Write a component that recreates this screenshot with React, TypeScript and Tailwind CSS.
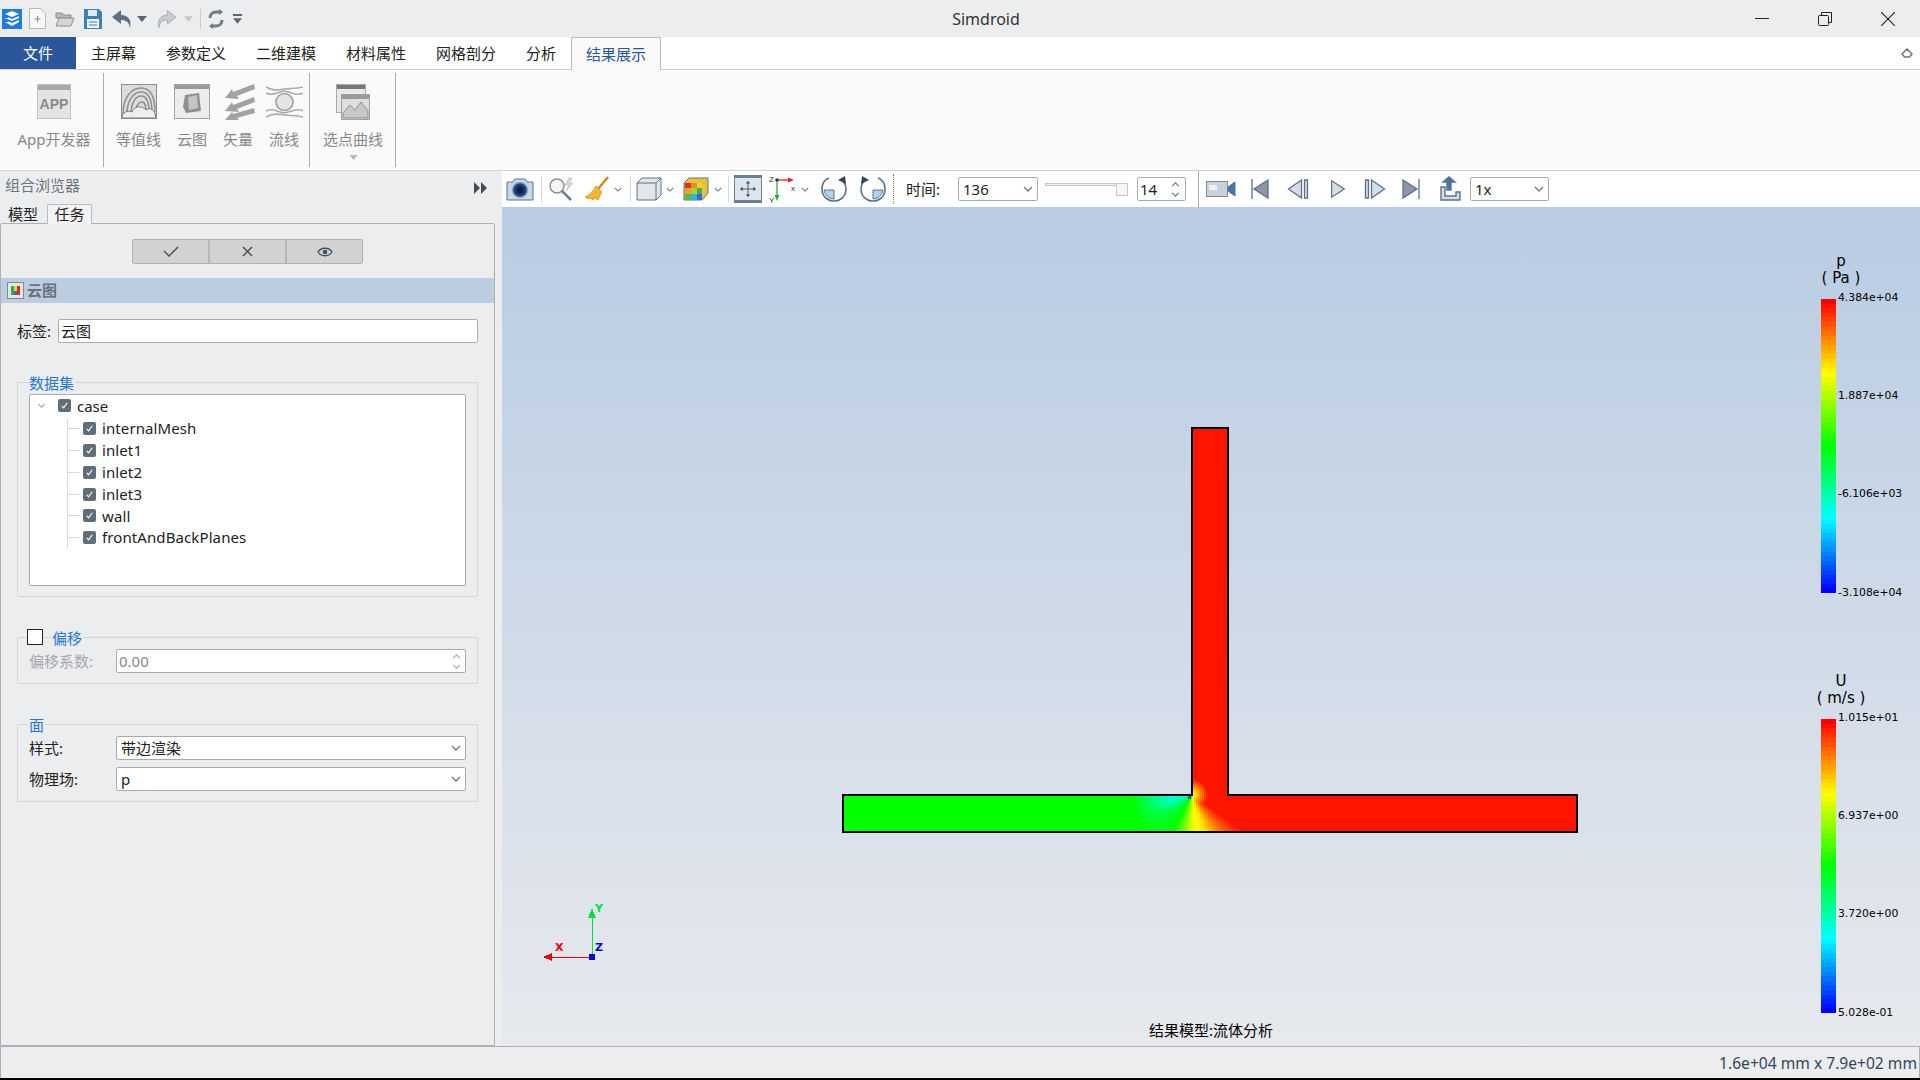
import React from 'react';

const jet = (v: number) => `hsl(${240 * (1 - v)},100%,50%)`;

// pressure field around the T junction, v is position on the colour bar
const fanStops: [number, number][] = [
  [0, 0.27], [15, 0.3], [40, 0.44], [62, 0.5], [78, 0.62], [90, 0.72], [110, 0.78], [125, 0.87], [145, 0.98], [360, 0.98],
];

function fieldValue(x: number, y: number) {
  const dx = x - 350;
  const dy = y - 368;
  const r = Math.hypot(dx, dy);
  let deg = (Math.atan2(dy, -dx) * 180) / Math.PI;
  if (deg < 0) deg += 360;
  let f = 0.98;
  for (let i = 0; i < fanStops.length - 1; i++) {
    const [a, va] = fanStops[i];
    const [b, vb] = fanStops[i + 1];
    if (deg >= a && deg <= b) {
      f = va + ((vb - va) * (deg - a)) / (b - a);
      break;
    }
  }
  if (f < 0.5) {
    const g = Math.max(0, Math.min(1, 1 - (r - 20) / 40));
    f = 0.5 + (f - 0.5) * g;
  }
  return Math.min(f, 0.72 + r / 60);
}

const fieldCells: { x: number; y: number; c: string }[] = [];
for (let x = 260; x < 440; x += 2) {
  for (let y = 330; y < 404; y += 2) {
    if (y < 368 && (x < 350 || x >= 386)) continue;
    fieldCells.push({ x, y, c: jet(fieldValue(x + 1, y + 1)) });
  }
}

function Chevron({ className, color = '#6b7680' }: { className?: string; color?: string }) {
  return (
    <svg viewBox="0 0 10 6" className={className} fill="none" stroke={color} strokeWidth="1.3">
      <path d="M1 1l4 4 4-4" />
    </svg>
  );
}

function Check({ on = true }: { on?: boolean }) {
  return (
    <span className="flex h-[13px] w-[13px] shrink-0 items-center justify-center rounded-[2px] bg-[#5f6e78]">
      {on && (
        <svg viewBox="0 0 12 12" className="h-[11px] w-[11px]" fill="none" stroke="#fff" strokeWidth="1.2">
          <path d="M3 6.5l2 2 4-5.5" />
        </svg>
      )}
    </span>
  );
}

function Caret({ className }: { className?: string }) {
  return (
    <svg viewBox="0 0 10 6" className={className} fill="#5b6470">
      <path d="M0 0h10L5 6z" />
    </svg>
  );
}

function TitleBar() {
  return (
    <div className="flex h-[37px] items-center bg-[#ecedef]">
      <div className="flex w-[260px] items-center">
        <svg viewBox="0 0 20 20" className="ml-[2px] h-[20px] w-[20px]">
          <rect width="20" height="20" fill="#1e7be0" />
          <path d="M3 5l7-3 7 3-7 3zM3 10l4-1.5 3 1.5 7-3v2l-7 3-7-3zM3 14l4-1.5 3 1.5 7-3v2l-7 4-7-4z" fill="#fff" />
        </svg>
        <svg viewBox="0 0 17 21" className="ml-[7px] h-[21px] w-[17px]" fill="#f8f8f8" stroke="#b5b8bc">
          <path d="M.5.5h11l5 5v15H.5z" />
          <path d="M8.5 8v6M5.5 11h6" stroke="#888" />
        </svg>
        <svg viewBox="0 0 20 18" className="ml-[9px] h-[18px] w-[20px]" stroke="#8a8d90">
          <path d="M1 3h6l2 2h7v3H1z" fill="#b8b8b8" />
          <path d="M1 16l3-8h15l-3 8z" fill="#d5d5d5" />
        </svg>
        <svg viewBox="0 0 18 20" className="ml-[9px] h-[20px] w-[18px]">
          <path d="M0 0h15l3 3v17H0z" fill="#3f7fb8" />
          <rect x="4" y="1" width="9" height="6" fill="#dfe9f2" />
          <rect x="3" y="10" width="12" height="9" fill="#f1f5f8" />
          <path d="M5 13h8M5 16h8" stroke="#3f7fb8" />
        </svg>
        <svg viewBox="0 0 20 20" className="ml-[10px] h-[20px] w-[20px]" fill="#5d6f86">
          <path d="M9 1L0 8l9 7v-4c5 0 8 2 9 8 2-8-2-13-9-13z" />
        </svg>
        <Caret className="ml-[5px] h-[6px] w-[10px]" />
        <svg viewBox="0 0 20 20" className="ml-[10px] h-[20px] w-[19px]" fill="#c9ccd0" stroke="#a5a8ac">
          <path d="M11 1l9 7-9 7v-4c-5 0-8 2-9 8-2-8 2-13 9-13z" />
        </svg>
        <svg viewBox="0 0 10 6" className="ml-[8px] h-[6px] w-[9px]" fill="#c4c6c9">
          <path d="M0 0h10L5 6z" />
        </svg>
        <div className="ml-[7px] h-[20px] w-px bg-[#c8cacd]" />
        <svg viewBox="0 0 16 20" className="ml-[7px] h-[20px] w-[16px]" fill="none" stroke="#727a83" strokeWidth="3">
          <path d="M2 9c0-4 3-6 6-6h5M14 11c0 4-3 6-6 6H3" />
          <path d="M11 0l4 3-4 3zM5 14l-4 3 4 3z" fill="#727a83" stroke="none" />
        </svg>
        <div className="ml-[9px] flex w-[9px] flex-col gap-[2px]">
          <div className="h-[2px] bg-[#5b6470]" />
          <Caret className="h-[6px] w-[9px]" />
        </div>
      </div>
      <div className="flex-1 text-center text-[16px] text-[#333]">Simdroid</div>
      <div className="relative flex w-[208px] items-center">
        <div className="ml-[43px] h-px w-[14px] bg-[#222]" />
        <svg viewBox="0 0 14 14" className="ml-[49px] h-[14px] w-[14px]" fill="none" stroke="#222">
          <rect x=".5" y="3.5" width="10" height="10" rx="1" />
          <path d="M3.5 3V.5h10v10H11" />
        </svg>
        <svg viewBox="0 0 14 14" className="ml-[49px] h-[14px] w-[14px]" fill="none" stroke="#222" strokeWidth="1.1">
          <path d="M0 0l14 14M14 0L0 14" />
        </svg>
      </div>
    </div>
  );
}

function MenuTabs() {
  const tabs = ['主屏幕', '参数定义', '二维建模', '材料属性', '网格剖分', '分析'];
  return (
    <div className="flex h-[33px] items-stretch border-b border-[#d2d3d5] bg-white text-[15px] text-[#222]">
      <div className="flex w-[76px] items-center justify-center bg-[#2b579a] text-white">文件</div>
      {tabs.map((t) => (
        <div key={t} className="flex items-center px-[15px]">
          {t}
        </div>
      ))}
      <div className="-mb-px flex items-center border-x border-t border-[#b9bbbe] bg-[#fafafa] px-[14px] text-[#2b579a]">结果展示</div>
      <div className="flex flex-1 items-center justify-end pr-[7px]">
        <svg viewBox="0 0 12 10" className="h-[10px] w-[12px]" fill="none" stroke="#6f7680" strokeWidth="1.5">
          <path d="M1 6l5-5 5 5-2.5 3h-5z" />
        </svg>
      </div>
    </div>
  );
}

function RibbonItem({ label, width, children }: { label: string; width: string; children: React.ReactNode }) {
  return (
    <div className={`flex flex-col items-center ${width}`}>
      <div className="flex h-[37px] items-center justify-center">{children}</div>
      <div className="mt-[8px] whitespace-nowrap text-[15px] leading-[22px] text-[#85888c]">{label}</div>
    </div>
  );
}

function Ribbon() {
  return (
    <div className="flex h-[101px] border-b border-[#d2d3d5] bg-[#fafafa] pt-[13px]">
      <div className="-mt-[10px] flex h-[94px] w-[104px] border-r border-[#a9abae] pt-[10px] pl-[8px]">
        <RibbonItem label="App开发器" width="w-[92px]">
          <svg viewBox="0 0 34 35" className="h-[35px] w-[34px]">
            <rect x=".5" y=".5" width="33" height="34" fill="#e4e4e4" stroke="#c0c0c0" />
            <rect x="1" y="1" width="32" height="5" fill="#a9a9a9" />
            <text x="17" y="25" textAnchor="middle" fontSize="14" fontWeight="700" fill="#8a8a8a" fontFamily="Liberation Sans">APP</text>
          </svg>
        </RibbonItem>
      </div>
      <div className="-mt-[10px] flex h-[94px] w-[206px] border-r border-[#a9abae] pt-[10px]">
        <RibbonItem label="等值线" width="w-[69px]">
          <svg viewBox="0 0 36 35" className="h-[35px] w-[36px]" fill="none" stroke="#8f8f8f">
            <rect x=".5" y=".5" width="35" height="34" fill="#dcdcdc" stroke="#8c8c8c" />
            <path d="M2 30C2 14 10 4 20 4s14 10 14 24M6 30C6 17 12 8 20 8s11 9 11 20M10 30c0-10 4-18 10-18s8 8 8 16M14 31c0-7 3-13 7-13s4 6 4 12" strokeWidth="1.5" />
            <path d="M1 34c0-6 6-8 10-6 2-6 10-7 14-2 4-3 9-1 10 8z" fill="#eee" stroke="#7c7c7c" />
          </svg>
        </RibbonItem>
        <RibbonItem label="云图" width="w-[38px]">
          <svg viewBox="0 0 36 35" className="h-[35px] w-[36px]">
            <rect x=".5" y=".5" width="35" height="34" fill="#ececec" stroke="#a5a5a5" />
            <rect x="1" y="1" width="34" height="4" fill="#9a9a9a" />
            <path d="M11 11l14-2 2 18-15 2-3-6z" fill="#8f8f8f" />
            <path d="M14 13l9-2 1 13-9 2z" fill="#c4c4c4" />
          </svg>
        </RibbonItem>
        <RibbonItem label="矢量" width="w-[54px]">
          <svg viewBox="0 0 34 36" className="h-[36px] w-[34px]" fill="#a2a2a2">
            <path d="M33 0l1 5-18 7 2 3-14-1 7-9 1 3z" />
            <path d="M33 13l1 5-18 7 2 3-14-1 7-9 1 3z" />
            <path d="M33 24l1 5-18 5 2 2H4l7-8 1 2z" />
          </svg>
        </RibbonItem>
        <RibbonItem label="流线" width="w-[38px]">
          <svg viewBox="0 0 37 36" className="h-[36px] w-[37px]" fill="none" stroke="#ababab" strokeWidth="1.6">
            <path d="M0 3c8 4 12 3 18 2s12 0 19-2M0 9c8 4 12-2 18-2s12 6 19 2M0 27c8-4 12 2 18 2s12-6 19-2M0 33c8-4 12-3 18-2s12 0 19 2" />
            <ellipse cx="18.5" cy="18" rx="8.5" ry="8.5" fill="#e4e4e4" stroke="#a0a0a0" />
          </svg>
        </RibbonItem>
      </div>
      <div className="-mt-[10px] flex h-[94px] w-[86px] border-r border-[#a9abae] pl-[1px] pt-[10px]">
        <div className="flex w-full flex-col items-center">
          <RibbonItem label="选点曲线" width="w-[84px]">
            <svg viewBox="0 0 34 36" className="h-[36px] w-[34px]">
              <rect x=".5" y=".5" width="29" height="28" fill="#e8e8e8" stroke="#a8a8a8" />
              <rect x="1" y="1" width="28" height="4" fill="#777" />
              <rect x="5.5" y="10.5" width="28" height="25" fill="#dedede" stroke="#a0a0a0" />
              <rect x="6" y="11" width="27" height="4" fill="#9a9a9a" />
              <path d="M7 29l7-8 5 5 6-8 7 9v7H7z" fill="#c8c8c8" stroke="#8f8f8f" />
            </svg>
          </RibbonItem>
          <svg viewBox="0 0 10 6" className="mt-[5px] h-[5px] w-[9px]" fill="#b8b8b8">
            <path d="M0 0h10L5 6z" />
          </svg>
        </div>
      </div>
    </div>
  );
}

function SelectBox({ value, className }: { value: string; className: string }) {
  return (
    <div className={`flex items-center justify-between rounded-[2px] border border-[#a9abae] bg-white pl-[4px] pr-[4px] text-[15px] ${className}`}>
      <span>{value}</span>
      <Chevron className="h-[6px] w-[10px]" />
    </div>
  );
}

function SpinArrows({ color = '#6b7680' }: { color?: string }) {
  return (
    <div className="flex flex-col gap-[5px]">
      <Chevron className="h-[5px] w-[9px] rotate-180" color={color} />
      <Chevron className="h-[5px] w-[9px]" color={color} />
    </div>
  );
}

function TreeRow({ label }: { label: string }) {
  return (
    <div className="flex h-[21.8px] items-center">
      <div className="h-px w-[12px] bg-[#d9dadb]" />
      <div className="ml-[3px]">
        <Check />
      </div>
      <span className="ml-[6px] tracking-[0.1px]">{label}</span>
    </div>
  );
}

function GroupBox({ className, children }: { className: string; children: React.ReactNode }) {
  return <div className={`relative ml-[16px] w-[461px] rounded-[2px] border border-[#d4d5d7] ${className}`}>{children}</div>;
}

function Legend({ className, children }: { className: string; children: React.ReactNode }) {
  return <div className={`absolute top-[-11px] bg-[#ecedef] text-[15px] leading-[22px] text-[#1f78d1] ${className}`}>{children}</div>;
}

function LeftPanel() {
  const items = ['internalMesh', 'inlet1', 'inlet2', 'inlet3', 'wall', 'frontAndBackPlanes'];
  return (
    <div className="flex w-[502px] flex-col bg-[#ecedef]">
      <div className="flex h-[33px] shrink-0 items-center justify-between pb-[4px] pl-[5px] pr-[15px] text-[15px] text-[#6d747c]">
        <span>组合浏览器</span>
        <svg viewBox="0 0 13 12" className="mt-[4px] h-[12px] w-[13px]" fill="#3f4d5c">
          <path d="M0 0l6 6-6 6zM7 0l6 6-6 6z" />
        </svg>
      </div>
      <div className="flex h-[19px] shrink-0 items-end pl-[8px] text-[15px] text-[#222]">
        <span className="mb-[-1px] leading-[20px]">模型</span>
        <span className="z-10 mb-[-1px] ml-[9px] flex h-[20px] w-[45px] items-center justify-center rounded-t-[2px] border-x border-t border-[#b9bbbe] bg-[#f4f4f5]">任务</span>
      </div>
      <div className="h-[824px] w-[495px] rounded-t-[2px] border border-[#aeb0b3] pt-[15px] text-[15px] text-[#222]">
        <div className="ml-[131px] flex h-[25px] w-[231px] rounded-[2px] border border-[#b0b2b5] bg-[#d2d2d2]">
          <div className="flex flex-1 items-center justify-center border-r-2 border-[#b5b6b8]">
            <svg viewBox="0 0 16 11" className="h-[11px] w-[16px]" fill="none" stroke="#3f4d5c" strokeWidth="1.4">
              <path d="M1 5l5 5 9-9" />
            </svg>
          </div>
          <div className="flex flex-1 items-center justify-center border-r-2 border-[#b5b6b8]">
            <svg viewBox="0 0 11 11" className="h-[11px] w-[11px]" fill="none" stroke="#3f4d5c" strokeWidth="1.4">
              <path d="M1 1l9 9M10 1l-9 9" />
            </svg>
          </div>
          <div className="flex flex-1 items-center justify-center">
            <svg viewBox="0 0 16 10" className="h-[10px] w-[16px]" fill="none" stroke="#3f4d5c" strokeWidth="1.3">
              <path d="M1 5c3-5 11-5 14 0-3 5-11 5-14 0z" />
              <circle cx="8" cy="5" r="1.6" fill="#3f4d5c" />
            </svg>
          </div>
        </div>
        <div className="mt-[14px] flex h-[25px] items-center bg-[#bbcde0] pl-[6px] font-bold text-[#68717d]">
          <svg viewBox="0 0 17 17" className="h-[17px] w-[17px]">
            <rect x=".5" y=".5" width="16" height="16" fill="#e6e6e6" stroke="#7f8a96" />
            <rect x="4" y="4" width="3.5" height="9" fill="#22b14c" />
            <rect x="7" y="4" width="3.5" height="5" fill="#f7d21c" />
            <rect x="7" y="9" width="3.5" height="4" fill="#2d6be0" />
            <rect x="10" y="4" width="3" height="9" fill="#e8281c" />
          </svg>
          <span className="ml-[3px]">云图</span>
        </div>
        <div className="mt-[16px] flex h-[24px] items-center pl-[16px]">
          <span className="w-[41px]">标签:</span>
          <div className="flex h-[24px] w-[420px] items-center rounded-[2px] border border-[#a9abae] bg-white pl-[2px]">云图</div>
        </div>
        <GroupBox className="mt-[39px] h-[215px] pt-[11px]">
          <Legend className="left-[10px] px-px">数据集</Legend>
          <div className="ml-[11px] h-[192px] w-[437px] rounded-[2px] border border-[#a9abae] bg-white">
            <div className="flex h-[21.8px] items-center pl-[7px]">
              <Chevron className="h-[5px] w-[9px]" color="#a5a7aa" />
              <div className="ml-[12px]">
                <Check />
              </div>
              <span className="ml-[6px]">case</span>
            </div>
            <div className="ml-[37px] mt-px border-l border-[#d9dadb]">
              {items.map((s) => (
                <TreeRow key={s} label={s} />
              ))}
            </div>
          </div>
        </GroupBox>
        <GroupBox className="mt-[40px] h-[47px] pt-[11px]">
          <div className="absolute -top-[9px] left-[9px] h-[16px] w-[16px] border border-[#222] bg-white" />
          <Legend className="left-[33px] px-px">偏移</Legend>
          <div className="flex items-center pl-[11px]">
            <span className="w-[87px] text-[#a6a8ab]">偏移系数:</span>
            <div className="flex h-[24px] w-[350px] items-center justify-between rounded-[2px] border border-[#a9abae] bg-white pl-[2px] pr-[4px] text-[#85888c]">
              <span>0.00</span>
              <SpinArrows color="#a8aaad" />
            </div>
          </div>
        </GroupBox>
        <GroupBox className="mt-[40px] h-[78px] pt-[11px]">
          <Legend className="left-[10px] px-px">面</Legend>
          <div className="flex items-center pl-[11px]">
            <span className="w-[87px]">样式:</span>
            <SelectBox value="带边渲染" className="h-[24px] w-[350px]" />
          </div>
          <div className="mt-[7px] flex items-center pl-[11px]">
            <span className="w-[87px]">物理场:</span>
            <SelectBox value="p" className="h-[24px] w-[350px]" />
          </div>
        </GroupBox>
      </div>
    </div>
  );
}

function MediaIcon({ d, extra, className }: { d: string; extra?: string; className: string }) {
  return (
    <svg viewBox="0 0 22 22" className={className} fill="#d6dde6" stroke="#5f7186" strokeWidth="1.3">
      <path d={d} />
      {extra && <path d={extra} fill="#8c97a5" />}
    </svg>
  );
}

function Toolbar() {
  return (
    <div className="flex h-[36px] shrink-0 items-center bg-white text-[15px] text-[#222]">
      <svg viewBox="0 0 28 24" className="ml-[4px] h-[24px] w-[28px]">
        <path d="M1 5h6l2-3h10l2 3h6v18H1z" fill="#c7d8ea" stroke="#5f7186" />
        <circle cx="14" cy="13" r="7.5" fill="#1f3f77" stroke="#8fa6bf" strokeWidth="1.5" />
        <circle cx="14" cy="13" r="3.5" fill="#0d1f40" />
      </svg>
      <div className="ml-[7px] h-[26px] w-px bg-[#d5d6d8]" />
      <svg viewBox="0 0 28 24" className="ml-[5px] h-[24px] w-[28px]" fill="none">
        <circle cx="10" cy="9" r="7" stroke="#8a9097" strokeWidth="1.5" fill="#f4f6f8" />
        <path d="M15 14l9 9" stroke="#777d84" strokeWidth="2.5" />
        <path d="M22 1l-4 7h4l-3 6 7-8h-4l3-5z" fill="#d9dbde" stroke="#b0b3b6" strokeWidth=".6" />
      </svg>
      <svg viewBox="0 0 24 26" className="ml-[10px] h-[26px] w-[24px]">
        <path d="M23 1L13 13" stroke="#d08a22" strokeWidth="2.5" />
        <path d="M11 10l6 6-4 8-4-2-1 2-3-2-1 1-4-2c5-2 8-6 11-11z" fill="#f2b632" stroke="#c98a1b" strokeWidth=".7" />
      </svg>
      <Chevron className="ml-[5px] h-[5px] w-[8px]" />
      <div className="ml-[8px] h-[26px] w-px bg-[#d5d6d8]" />
      <svg viewBox="0 0 26 24" className="ml-[5px] h-[24px] w-[26px]" stroke="#5f7186" strokeLinejoin="round">
        <path d="M1 6l5-5h19v17l-5 5H1z" fill="#e2e6ea" />
        <path d="M1 6h19v17M20 6l5-5" fill="none" />
      </svg>
      <Chevron className="ml-[4px] h-[5px] w-[8px]" />
      <svg viewBox="0 0 26 24" className="ml-[9px] h-[24px] w-[26px]">
        <path d="M1 6l5-5h19v15l-6 7H1z" fill="#e7c33c" stroke="#5f7186" />
        <rect x="2" y="6" width="6" height="5" fill="#d6342a" />
        <rect x="8" y="6" width="6" height="5" fill="#ef8a1d" />
        <rect x="14" y="6" width="5" height="5" fill="#f3cf2c" />
        <rect x="2" y="11" width="6" height="6" fill="#e9a32a" />
        <rect x="8" y="11" width="6" height="6" fill="#a9cf3a" />
        <rect x="14" y="11" width="5" height="6" fill="#3fb44c" />
        <rect x="2" y="17" width="6" height="6" fill="#56b948" />
        <rect x="8" y="17" width="6" height="6" fill="#35b4d2" />
        <rect x="14" y="17" width="5" height="6" fill="#2f6ed6" />
      </svg>
      <Chevron className="ml-[5px] h-[5px] w-[8px]" />
      <div className="ml-[6px] h-[26px] w-px bg-[#d5d6d8]" />
      <div className="ml-[5px] flex h-[28px] w-[28px] items-center justify-center border border-y-[3px] border-[#6d7f94] bg-[#dfe5ec]">
        <svg viewBox="0 0 20 20" className="h-[18px] w-[18px]" fill="#3f4d5c" stroke="#3f4d5c">
          <path d="M10 2v16M2 10h16" fill="none" />
          <path d="M10 1l2.5 3h-5zM10 19l2.5-3h-5zM1 10l3-2.5v5zM19 10l-3-2.5v5z" stroke="none" />
        </svg>
      </div>
      <svg viewBox="0 0 28 30" className="ml-[7px] h-[30px] w-[28px]" fontFamily="Liberation Sans" fontSize="8">
        <text x="0" y="8" fill="#333">Z</text>
        <path d="M8 6h14" stroke="#e8201c" strokeWidth="1.3" />
        <path d="M19 3.5l6 2.5-6 2.5z" fill="#e8201c" />
        <circle cx="8" cy="6" r="1.8" fill="#333" />
        <text x="22" y="17" fill="#333">x</text>
        <path d="M8 7v17" stroke="#22b03c" strokeWidth="1.3" />
        <path d="M5.5 21l2.5 6 2.5-6z" fill="#22b03c" />
        <text x="0" y="29" fill="#333">Y</text>
      </svg>
      <Chevron className="ml-[4px] h-[5px] w-[8px]" />
      <svg viewBox="0 0 26 28" className="ml-[12px] h-[28px] w-[26px]" fill="none" stroke="#5f7186" strokeWidth="1.6">
        <path d="M8 3C3 5 1 9 1 14c0 7 5 12 12 12s12-5 12-12c0-4-2-7-4-9" />
        <path d="M25 9l-1-8-7 4z" fill="#33465c" stroke="none" />
        <path d="M3 15h10v9c-5 0-9-4-10-9z" fill="#a9d4f2" stroke="#5f7186" strokeWidth="1" />
      </svg>
      <svg viewBox="0 0 26 28" className="ml-[13px] h-[28px] w-[26px]" fill="none" stroke="#5f7186" strokeWidth="1.6">
        <path d="M18 3c5 2 7 6 7 11 0 7-5 12-12 12S1 21 1 14c0-4 2-7 4-9" />
        <path d="M1 9l1-8 7 4z" fill="#33465c" stroke="none" />
        <path d="M23 15H13v9c5 0 9-4 10-9z" fill="#a9d4f2" stroke="#5f7186" strokeWidth="1" />
      </svg>
      <div className="ml-[7px] h-[30px] border-l border-dotted border-[#777]" />
      <span className="ml-[12px] w-[52px]">时间:</span>
      <SelectBox value="136" className="h-[24px] w-[80px]" />
      <div className="relative ml-[7px] h-[24px] w-[83px]">
        <div className="absolute left-0 right-0 top-[6px] h-[3px] border border-[#c4c6c9] bg-[#eee]" />
        <div className="absolute right-0 top-[6px] h-[13px] w-[12px] border border-[#c4c6c9] bg-[#f6f6f6]" />
      </div>
      <div className="ml-[9px] flex h-[24px] w-[49px] items-center justify-between rounded-[2px] border border-[#a9abae] pl-[2px] pr-[5px]">
        <span>14</span>
        <SpinArrows />
      </div>
      <div className="ml-[12px] h-[36px] w-px bg-[#a9abae]" />
      <svg viewBox="0 0 30 18" className="ml-[7px] h-[18px] w-[30px]">
        <rect x=".5" y="1.5" width="21" height="15" fill="#c9d2dc" stroke="#7f8d9d" />
        <rect x="3" y="5" width="8" height="5" fill="#eef1f4" />
        <path d="M22 7l7-5v14l-7-5z" fill="#3d78b0" stroke="#5f7186" />
      </svg>
      <MediaIcon className="ml-[13px] h-[22px] w-[22px]" d="M3 1v20" extra="M19 2L5 11l14 9z" />
      <MediaIcon className="ml-[15px] h-[22px] w-[25px]" d="M14 2L1 11l13 9zM17 2v18h3V2z" />
      <MediaIcon className="ml-[17px] h-[22px] w-[20px]" d="M4 2l14 9-14 9z" />
      <MediaIcon className="ml-[14px] h-[22px] w-[25px]" d="M8 2l13 9-13 9zM2 2v18h3V2z" />
      <MediaIcon className="ml-[13px] h-[22px] w-[22px]" d="M19 1v20" extra="M3 2l14 9-14 9z" />
      <svg viewBox="0 0 24 26" className="ml-[16px] h-[26px] w-[24px]" fill="#d6dde6" stroke="#5f7186" strokeWidth="1.4">
        <path d="M3 11v13h19v-8h-4v4H7v-9z" />
        <path d="M9 14V6H5l6-5 6 5h-4v8z" fill="#3d78b0" />
      </svg>
      <SelectBox value="1x" className="ml-[8px] h-[24px] w-[79px]" />
    </div>
  );
}

function ColorBar({ name, unit, labels, className }: { name: string; unit: string; labels: string[]; className: string }) {
  const steps = Array.from({ length: 64 }, (_, i) => 1 - i / 63);
  return (
    <div className={`absolute w-[99px] font-['DejaVu_Sans',sans-serif] text-black ${className}`}>
      <div className="absolute left-0 top-0 h-[294px] w-[15px] overflow-hidden">
        {steps.map((v) => (
          <div key={v} className="h-[4.6px]" style={{ backgroundColor: jet(v) }} />
        ))}
      </div>
      <div className="absolute left-[-18px] top-[-46px] w-[76px] text-center text-[15px] leading-[17px]">
        <div>{name}</div>
        <div>( {unit} )</div>
      </div>
      {labels.map((l, i) => (
        <div key={l} className={`absolute left-[17px] text-[10.8px] leading-[12px] ${['top-[-7px]', 'top-[91px]', 'top-[189px]', 'top-[288px]'][i]}`}>
          {l}
        </div>
      ))}
    </div>
  );
}

function Viewport() {
  return (
    <div className="relative flex-1 overflow-hidden bg-gradient-to-b from-[#b8cce3] to-[#e7e9ed]">
      {/* result model, T shaped channel */}
      <svg viewBox="0 0 736 407" className="absolute left-[340px] top-[220px] h-[407px] w-[736px]" shapeRendering="crispEdges">
        <rect x="0" y="368" width="260" height="37" fill={jet(0.5)} />
        <rect x="440" y="368" width="296" height="37" fill={jet(0.98)} />
        <rect x="350" y="0" width="36" height="330" fill={jet(0.98)} />
        {fieldCells.map((c) => (
          <rect key={`${c.x}-${c.y}`} x={c.x} y={c.y} width="2" height="2" fill={c.c} />
        ))}
        <rect x="346" y="369" width="3" height="3" fill="#1060e0" />
        <path d="M350 368V1h36v367h349v37H1v-37z" fill="none" stroke="#000" strokeWidth="1.5" />
      </svg>
      <svg viewBox="0 0 60 60" className="absolute left-[41px] top-[696px] h-[60px] w-[60px]" fontFamily="DejaVu Sans" fontWeight="700" fontSize="11" shapeRendering="crispEdges">
        <path d="M49 10v44" stroke="#00e040" strokeWidth="1" />
        <path d="M49 5l4 10h-8z" fill="#00e040" />
        <text x="52" y="9" fill="#00e040">Y</text>
        <path d="M49 54H8" stroke="#f00000" strokeWidth="1" />
        <path d="M0 54l9-4v8z" fill="#f00000" />
        <text x="12" y="48" fill="#f00000">X</text>
        <text x="52" y="48" fill="#0000e0">Z</text>
        <rect x="46" y="51" width="6" height="6" fill="#0000e0" />
      </svg>
      <ColorBar className="left-[1319px] top-[92px]" name="p" unit="Pa" labels={['4.384e+04', '1.887e+04', '-6.106e+03', '-3.108e+04']} />
      <ColorBar className="left-[1319px] top-[512px]" name="U" unit="m/s" labels={['1.015e+01', '6.937e+00', '3.720e+00', '5.028e-01']} />
      <div className="absolute bottom-[6px] left-0 w-[1418px] text-center text-[15px] leading-[20px] text-black">结果模型:流体分析</div>
    </div>
  );
}

export default function App() {
  return (
    <div className="flex h-[1080px] w-[1920px] flex-col overflow-hidden bg-black font-['Noto_Sans','Noto_Sans_CJK_SC',sans-serif] text-[#222]">
      <TitleBar />
      <MenuTabs />
      <Ribbon />
      <div className="flex h-[876px] border-b border-[#aeb0b3]">
        <LeftPanel />
        <div className="flex flex-1 flex-col">
          <Toolbar />
          <Viewport />
        </div>
      </div>
      <div className="flex h-[31px] items-center justify-end border-x border-[#aeb0b3] bg-[#ecedef] pr-[2px] pt-[3px] text-[15.6px] text-[#33465c]">
        1.6e+04 mm x 7.9e+02 mm
      </div>
      <div className="h-[2px] bg-black" />
    </div>
  );
}
